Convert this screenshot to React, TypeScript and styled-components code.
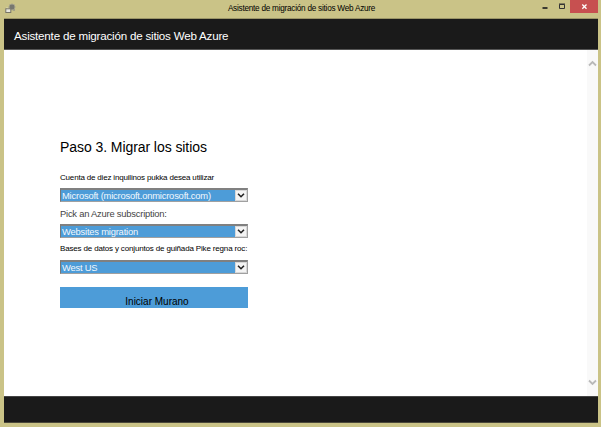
import React from "react";
import styled, { createGlobalStyle } from "styled-components";

const GlobalStyle = createGlobalStyle`
  * { box-sizing: border-box; }
  body { margin: 0; background: #cac387; }
`;

const Window = styled.div`
  width: 601px;
  height: 427px;
  padding: 0 3px 4px 4px;
  display: flex;
  flex-direction: column;
  overflow: hidden;
  background: #cac387;
  font-family: "Liberation Sans", Arial, sans-serif;
`;

const TitleBar = styled.div`
  height: 19px;
  flex: none;
  display: grid;
  grid-template-columns: 60px 1fr 60px;
  align-items: start;
  border-bottom: 1px solid #9b9568;
`;

const AppIcon = styled.svg`
  display: block;
  margin: 3px 0 0 1px;
`;

const Caption = styled.div`
  display: flex;
  justify-content: center;
  padding-left: 1px;
`;

const Controls = styled.div`
  display: flex;
  justify-content: flex-end;
  height: 13px;
`;

const Control = styled.button<{ $w: number; $danger?: boolean }>`
  width: ${(p) => p.$w}px;
  height: 13px;
  flex: none;
  padding: 0;
  border: 0;
  background: ${(p) => (p.$danger ? "#c75050" : "transparent")};
  svg { display: block; }
`;

const Text = styled.span<{ $size: number; $line: number; $spacing?: number; $color?: string }>`
  display: block;
  flex: none;
  white-space: nowrap;
  font-size: ${(p) => p.$size}px;
  line-height: ${(p) => p.$line}px;
  letter-spacing: ${(p) => p.$spacing ?? 0}px;
  color: ${(p) => p.$color ?? "#000"};
`;

const Header = styled.header`
  height: 31px;
  flex: none;
  padding: 8px 0 0 10px;
  background: #1a1a1a;
  border-bottom: 1px solid #555;
`;

const Body = styled.main`
  flex: 1;
  display: flex;
  justify-content: space-between;
  background: #fff;
`;

const Form = styled.div`
  width: 189px;
  margin-left: 56px;
  padding-top: 85px;
`;

const Field = styled.div<{ $h: number; $gap: number }>`
  height: ${(p) => p.$h}px;
  display: flex;
  flex-direction: column;
  justify-content: flex-end;
  gap: ${(p) => p.$gap}px;
`;

const Select = styled.div`
  width: 188px;
  height: 14px;
  flex: none;
  display: flex;
  justify-content: space-between;
  padding-left: 1px;
  background: #4d9cd8;
  border: 1px solid #a0a0a0;
  border-top: 2px solid #808080;
  border-left-color: #777;
`;

const Arrow = styled.span`
  width: 12px;
  height: 11px;
  background: #f4f4f4;
  border: 1px solid #d8d8d8;
  svg { display: block; }
`;

const Submit = styled.button`
  width: 188px;
  height: 21px;
  margin-top: 13px;
  padding: 6px 0 0 6px;
  border: 0;
  display: flex;
  justify-content: center;
  background: #4d9cd8;
  font-family: inherit;
`;

const Scrollbar = styled.div`
  width: 11px;
  display: flex;
  flex-direction: column;
  justify-content: space-between;
  align-items: center;
  padding: 10px 0 10px;
  background: #f9f9f9;
`;

const Footer = styled.footer`
  height: 27px;
  flex: none;
  background: #1a1a1a;
  border-top: 1px solid #444;
  border-bottom: 1px solid #4a483a;
`;

function Dropdown({ value }: { value: string }) {
  return (
    <Select>
      <Text $size={9.4} $line={11} $spacing={-0.2} $color="#f2f8fd">{value}</Text>
      <Arrow>
        <svg width="10" height="9" viewBox="0 0 10 9">
          <path d="M2 2.7 5 5.7 8 2.7" fill="none" stroke="#222" strokeWidth="1.6" />
        </svg>
      </Arrow>
    </Select>
  );
}

function Chevron({ up }: { up?: boolean }) {
  return (
    <svg width="9" height="7" viewBox="0 0 9 7">
      <path d={up ? "M1 5.5 4.5 2 8 5.5" : "M1 1.5 4.5 5 8 1.5"} fill="none" stroke="#b9b9b9" strokeWidth="1.8" />
    </svg>
  );
}

export default function App() {
  return (
    <>
      <GlobalStyle />
      <Window>
        <TitleBar>
          <AppIcon width="12" height="12" viewBox="0 0 12 12">
            <circle cx="7" cy="4" r="3" fill="#77776f" stroke="#a5a38c" />
            <path d="M2 4.5 5 8" stroke="#eee" />
            <rect x="0.8" y="5.8" width="5" height="3.7" fill="#e9e8df" stroke="#777568" />
            <circle cx="9" cy="7" r="1" fill="#9a9887" />
          </AppIcon>
          <Caption>
            <Text $size={8.2} $line={17} $spacing={-0.24}>Asistente de migración de sitios Web Azure</Text>
          </Caption>
          <Controls>
            <Control $w={16} aria-label="Minimizar">
              <svg width="16" height="13"><path d="M2.5 8h5" stroke="#222" strokeWidth="1.7" /></svg>
            </Control>
            <Control $w={14} aria-label="Maximizar">
              <svg width="14" height="13"><path d="M3.5 4.5h5v4h-5z M3 4h6" fill="none" stroke="#333" /></svg>
            </Control>
            <Control $w={28} $danger aria-label="Cerrar">
              <svg width="28" height="13"><path d="M12.3 4.5 16.5 8.7M16.5 4.5 12.3 8.7" stroke="#fff" strokeWidth="1.3" /></svg>
            </Control>
          </Controls>
        </TitleBar>
        <Header>
          <Text $size={11.6} $line={18} $spacing={-0.2} $color="#fff">Asistente de migración de sitios Web Azure</Text>
        </Header>
        <Body>
          <Form>
            <Text $size={14} $line={24} $spacing={-0.07}>Paso 3. Migrar los sitios</Text>
            <Field $h={43} $gap={4}>
              <Text $size={8} $line={12} $spacing={-0.18}>Cuenta de diez inquilinos pukka desea utilizar</Text>
              <Dropdown value="Microsoft (microsoft.onmicrosoft.com)" />
            </Field>
            <Field $h={36} $gap={4}>
              <Text $size={9.4} $line={12} $spacing={-0.22} $color="#444">Pick an Azure subscription:</Text>
              <Dropdown value="Websites migration" />
            </Field>
            <Field $h={36} $gap={5}>
              <Text $size={8} $line={12} $spacing={-0.16}>Bases de datos y conjuntos de guiñada Pike regna roc:</Text>
              <Dropdown value="West US" />
            </Field>
            <Submit>
              <Text $size={10} $line={18}>Iniciar Murano</Text>
            </Submit>
          </Form>
          <Scrollbar>
            <Chevron up />
            <Chevron />
          </Scrollbar>
        </Body>
        <Footer />
      </Window>
    </>
  );
}
